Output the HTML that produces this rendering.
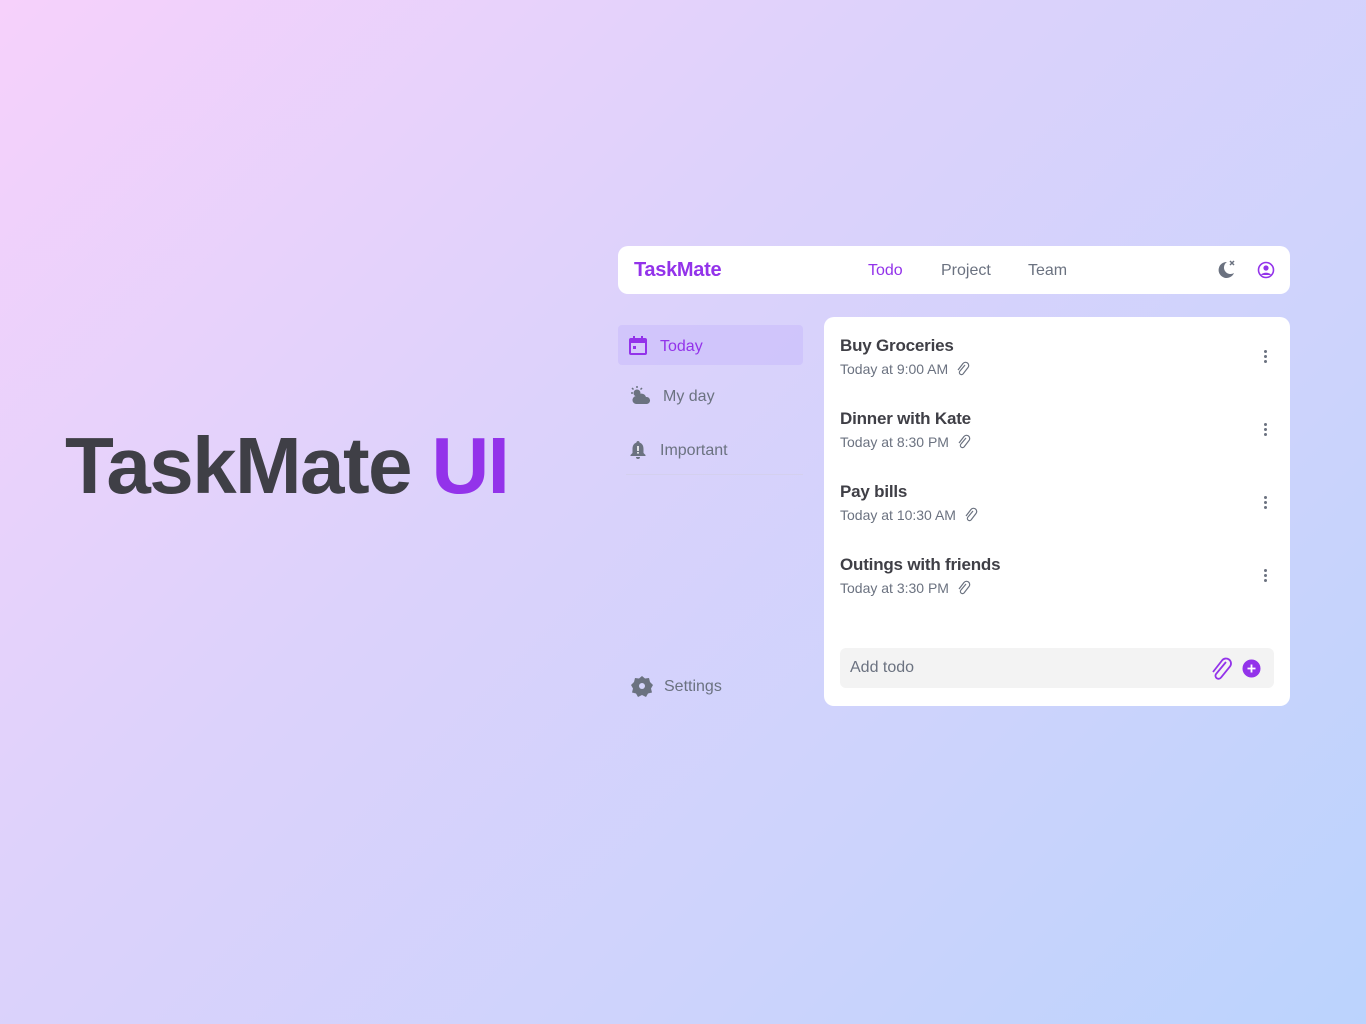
<!DOCTYPE html>
<html><head><meta charset="utf-8"><style>
*{margin:0;padding:0;box-sizing:border-box}
body{width:1366px;height:1024px;overflow:hidden;font-family:"Liberation Sans",Roboto,sans-serif;background:linear-gradient(135deg,#f6d1fb 0%,#dcd2fb 40%,#cdd3fc 70%,#bbd3fd 100%);position:relative}
.abs{position:absolute}
.title{left:65px;top:420px;font-size:80px;font-weight:700;color:#3f3f46;letter-spacing:-1.6px;white-space:nowrap}
.title span{color:#9333ea}
.hdr{left:618px;top:246px;width:672px;height:48px;background:#fff;border-radius:10px}
.logo{left:16px;top:13px;font-size:20px;font-weight:700;color:#9333ea;letter-spacing:-0.3px}
.nav{top:16px;font-size:16px;color:#6b7280}
.side{left:618px;font-size:16px;color:#6b7280}
.card{left:824px;top:317px;width:466px;height:389px;background:#fff;border-radius:10px}
.item{left:16px}
.item .t{font-size:17px;font-weight:700;color:#3f3f46;letter-spacing:-0.2px}
.item .s{font-size:14px;color:#6b7280;margin-top:5px;display:flex;align-items:center;gap:8px}
.dots{left:440px;width:4px}
.dots i{display:block;width:3px;height:3px;border-radius:50%;background:#6b7280;margin-bottom:2px}
.add{left:16px;top:331px;width:434px;height:40px;background:#f3f3f3;border-radius:6px;font-size:16px;color:#6b7280;padding:11px 10px}
</style></head><body>
<div class="abs title">TaskMate <span>UI</span></div>
<div class="abs hdr">
 <div class="abs logo">TaskMate</div>
 <div class="abs nav" style="left:250px;color:#9333ea">Todo</div>
 <div class="abs nav" style="left:323px">Project</div>
 <div class="abs nav" style="left:410px">Team</div>
 <svg class="abs" style="left:597px;top:13px" width="22" height="22" viewBox="0 0 22 22"><path d="M12 3a8 8 0 1 0 7 11 6 6 0 0 1-7-11z" fill="#6b7280"/><path d="M15 2l4 4M19 2l-4 4" stroke="#6b7280" stroke-width="1.5"/></svg>
 <svg class="abs" style="left:639px;top:15px" width="18" height="18" viewBox="0 0 18 18"><circle cx="9" cy="9" r="7.5" fill="none" stroke="#9333ea" stroke-width="1.6"/><circle cx="9" cy="7" r="2.6" fill="#9333ea"/><path d="M4 14c1-3 9-3 10 0" fill="#9333ea"/></svg>
</div>
<div class="abs" style="left:618px;top:325px;width:185px;height:40px;background:rgba(200,185,252,.55);border-radius:4px"></div>
<svg class="abs" style="left:628px;top:335px" width="20" height="21" viewBox="0 0 20 21"><rect x="1" y="3" width="18" height="17" rx="2" fill="#9333ea"/><rect x="3" y="8" width="14" height="10" fill="#d6c9fb"/><rect x="5" y="1" width="2" height="4" fill="#9333ea"/><rect x="13" y="1" width="2" height="4" fill="#9333ea"/><rect x="5" y="11" width="3" height="3" fill="#9333ea"/></svg>
<div class="abs side" style="left:660px;top:338px;color:#9333ea">Today</div>
<svg class="abs" style="left:629px;top:385px" width="24" height="22" viewBox="0 0 24 22"><circle cx="8" cy="8" r="3.5" fill="#6b7280"/><path d="M8 1v2M2 8h2M3 3l1.5 1.5M13 3l-1.5 1.5" stroke="#6b7280" stroke-width="1.5"/><path d="M7 19a4 4 0 0 1 1-8 5 5 0 0 1 9 1 3.5 3.5 0 0 1 1 7z" fill="#6b7280"/></svg>
<div class="abs side" style="left:663px;top:388px">My day</div>
<svg class="abs" style="left:629px;top:440px" width="18" height="20" viewBox="0 0 18 20"><path d="M9 1a1.5 1.5 0 0 1 1.5 1.5c3 1 4 3.5 4 6.5v4l2 2v1H1.5v-1l2-2v-4c0-3 1-5.5 4-6.5A1.5 1.5 0 0 1 9 1z" fill="#6b7280"/><path d="M7 17h4a2 2 0 0 1-4 0z" fill="#6b7280"/><rect x="8.2" y="6" width="1.6" height="5" fill="#fff"/><rect x="8.2" y="12" width="1.6" height="1.6" fill="#fff"/></svg>
<div class="abs side" style="left:660px;top:442px">Important</div>
<div class="abs" style="left:626px;top:474px;width:177px;height:1px;background:#d4d0ee"></div>
<svg class="abs" style="left:631px;top:675px" width="22" height="22" viewBox="0 0 22 22"><path d="M11 1l3 2.5 4-.5 1 4 3 3-2 3.5 1 4-4 1-2 3.5-4-2-4 2-2-3.5-4-1 1-4L0 10l3-3 1-4 4 .5z" fill="#6b7280"/><circle cx="11" cy="11" r="3" fill="#d4d4fb"/></svg>
<div class="abs side" style="left:664px;top:678px">Settings</div>
<div class="abs card">
 <div class="abs item" style="top:19px"><div class="t">Buy Groceries</div><div class="s">Today at 9:00 AM <svg width="14" height="16" viewBox="0 0 14 16"><path d="M9 4L4 10a2 2 0 0 0 3 3l5-6.5a3.2 3.2 0 0 0-5-4L2 9" fill="none" stroke="#6b7280" stroke-width="1.2"/></svg></div></div>
 <div class="abs dots" style="top:33px"><i></i><i></i><i></i></div>
 <div class="abs item" style="top:92px"><div class="t">Dinner with Kate</div><div class="s">Today at 8:30 PM <svg width="14" height="16" viewBox="0 0 14 16"><path d="M9 4L4 10a2 2 0 0 0 3 3l5-6.5a3.2 3.2 0 0 0-5-4L2 9" fill="none" stroke="#6b7280" stroke-width="1.2"/></svg></div></div>
 <div class="abs dots" style="top:106px"><i></i><i></i><i></i></div>
 <div class="abs item" style="top:165px"><div class="t">Pay bills</div><div class="s">Today at 10:30 AM <svg width="14" height="16" viewBox="0 0 14 16"><path d="M9 4L4 10a2 2 0 0 0 3 3l5-6.5a3.2 3.2 0 0 0-5-4L2 9" fill="none" stroke="#6b7280" stroke-width="1.2"/></svg></div></div>
 <div class="abs dots" style="top:179px"><i></i><i></i><i></i></div>
 <div class="abs item" style="top:238px"><div class="t">Outings with friends</div><div class="s">Today at 3:30 PM <svg width="14" height="16" viewBox="0 0 14 16"><path d="M9 4L4 10a2 2 0 0 0 3 3l5-6.5a3.2 3.2 0 0 0-5-4L2 9" fill="none" stroke="#6b7280" stroke-width="1.2"/></svg></div></div>
 <div class="abs dots" style="top:252px"><i></i><i></i><i></i></div>
 <div class="abs add">Add todo
  <svg class="abs" style="left:370px;top:8px" width="24" height="26" viewBox="0 0 24 26"><path d="M16 6L6 18a3 3 0 0 0 5 3.5l9-11a5 5 0 0 0-8-6L3 16" fill="none" stroke="#9333ea" stroke-width="1.8"/></svg>
  <svg class="abs" style="left:402px;top:11px" width="19" height="19" viewBox="0 0 19 19"><circle cx="9.5" cy="9.5" r="9" fill="#9333ea"/><path d="M9.5 5.5v8M5.5 9.5h8" stroke="#fff" stroke-width="1.8"/></svg>
 </div>
</div>
</body></html>
